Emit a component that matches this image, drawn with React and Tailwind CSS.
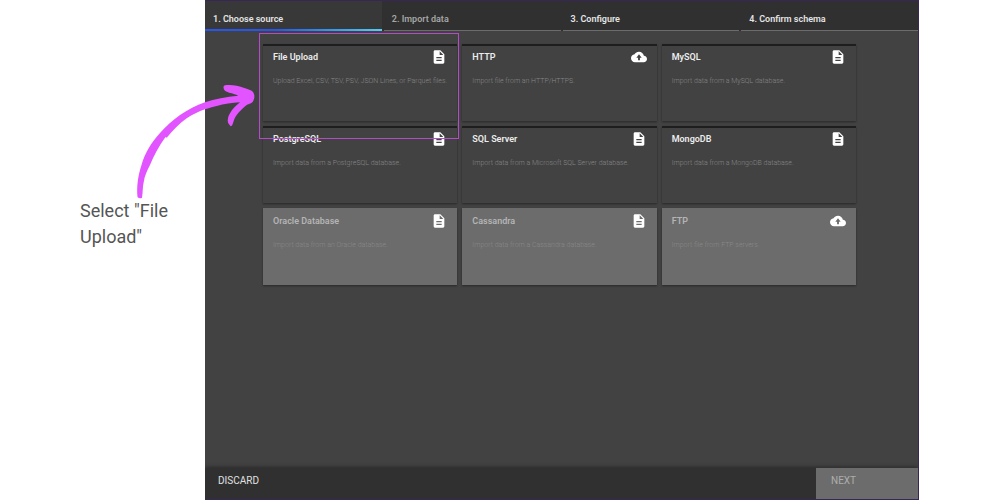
import React from 'react';
import { MdDescription } from 'react-icons/md';
import clsx from 'clsx';

const steps = [
  { label: '1. Choose source', state: 'active' },
  { label: '2. Import data', state: 'muted' },
  { label: '3. Configure', state: 'idle' },
  { label: '4. Confirm schema', state: 'idle' },
];

const sources = [
  { title: 'File Upload', text: 'Upload Excel, CSV, TSV, PSV, JSON Lines, or Parquet files.', highlight: true },
  { title: 'HTTP', text: 'Import file from an HTTP/HTTPS.', cloud: true },
  { title: 'MySQL', text: 'Import data from a MySQL database.' },
  { title: 'PostgreSQL', text: 'Import data from a PostgreSQL database.' },
  { title: 'SQL Server', text: 'Import data from a Microsoft SQL Server database.' },
  { title: 'MongoDB', text: 'Import data from a MongoDB database.' },
  { title: 'Oracle Database', text: 'Import data from an Oracle database.', disabled: true },
  { title: 'Cassandra', text: 'Import data from a Cassandra database.', disabled: true },
  { title: 'FTP', text: 'Import file from FTP servers.', cloud: true, disabled: true },
];

const CloudIcon = () => (
  <svg viewBox="0 0 24 24" className="size-4" fill="currentColor">
    <path d="M19.35 10.04C18.67 6.59 15.64 4 12 4 9.11 4 6.6 5.64 5.35 8.04 2.34 8.36 0 10.91 0 14c0 3.31 2.69 6 6 6h13c2.76 0 5-2.24 5-5 0-2.64-2.05-4.78-4.65-4.96zM13.4 13v4h-2.8v-4H8l4-5 4 5h-2.6z" />
  </svg>
);

const SourceCard = ({ source }) => (
  <div className="relative">
    <button
      type="button"
      disabled={source.disabled}
      className={clsx(
        'flex h-[77px] w-full flex-col border-t-2 px-[10px] pt-[3px] text-left shadow-[0_1px_2px_rgba(0,0,0,0.4)]',
        source.disabled ? 'border-[#6c6c6c] bg-[#6c6c6c]' : 'border-[#1e1e1e] bg-[#424242]'
      )}
    >
      <span className="flex h-4 w-full items-center justify-between">
        <span className={clsx('text-[9px] leading-3 font-semibold', source.disabled ? 'text-[#b4b4b4]' : 'text-[#ececec]')}>
          {source.title}
        </span>
        <span className="text-white">
          {source.cloud ? <CloudIcon /> : <MdDescription className="size-4" />}
        </span>
      </span>
      <span className={clsx('mt-[10px] text-[7px] leading-3 font-light whitespace-nowrap', source.disabled ? 'text-[#888888]' : 'text-[#868686]')}>
        {source.text}
      </span>
    </button>
    {source.highlight && (
      <div className="pointer-events-none absolute -top-[11px] -right-0.5 -bottom-[18px] -left-1 z-10 border border-[#b44bc8]" />
    )}
  </div>
);

// hand drawn arrow from the note to the first card
const Arrow = () => (
  <svg viewBox="0 0 122 120" className="absolute top-[82px] left-[134px] z-20 h-[120px] w-[122px]" fill="#e254ff">
    <path d="M3.500 115C2.500 104 4 94 7.500 83C11 71 17 61 26 51C32 44 39 38 46 33C54 28 62 23 71 20.300C81 17 92 15 104.300 13.700C99 11 94 11 91 8.700C89 6.500 89 3.500 91 3.200C95 2.600 99 3 102.700 3.700C108 5 113 6.800 117.700 8.700Q119.500 9.500 120.300 13Q120.800 17 119.300 18.700C118 21.500 115 21.500 112.700 23C109 26 105.500 29 102.700 33C100 36.500 99.500 40 98.300 43Q97 45 96 43.500Q93.500 41 93.700 38.700C94 35.500 94.500 33.500 96 31.300C98.500 26.500 102 23.500 106 20.300C98 20.500 90 22 82.700 24C78.500 25 75 26 71 27.300C64.500 29.500 58.500 32.500 52.700 36.300C45 42 39 48 32.700 55.700L31.500 55C25 64 20 73 16 83C13 89 10.500 94 9.800 99.700C8.500 104 9 110 8 115.700Q5.500 117 3.500 115Z" />
  </svg>
);

export default function App() {
  return (
    <div className="relative flex min-h-screen bg-white pr-[81px] font-[Roboto,sans-serif]">
      <aside className="w-[205px] shrink-0 pt-[198px] pl-20">
        <p className="w-24 text-lg leading-[26px] text-[#555555]">Select "File Upload"</p>
      </aside>
      <Arrow />

      <div className="flex flex-1 flex-col overflow-hidden border-t border-r border-b border-[#382659] bg-[#424242]">
        <nav className="grid grid-cols-4 gap-0.5 bg-[#303030]">
          {steps.map((step) => (
            <button
              key={step.label}
              type="button"
              className={clsx(
                'flex h-[30px] flex-col justify-between text-left',
                step.state === 'active' ? 'bg-[#383838]' : 'bg-[#303030]'
              )}
            >
              <span className={clsx('px-2 pt-3 text-[9px] leading-3 font-semibold', step.state === 'muted' ? 'text-[#a5a5a5]' : 'text-[#e4e4e4]')}>
                {step.label}
              </span>
              <span
                className={clsx(
                  'w-full',
                  step.state === 'active' ? 'h-0.5 bg-linear-to-r from-[#2856e8] from-40% to-[#55cdf5]' : 'h-px bg-[#6c6c6c]'
                )}
              />
            </button>
          ))}
        </nav>

        <main className="flex-1 pt-[13px] pr-[62px] pl-[58px]">
          <div className="grid grid-cols-3 gap-[5px]">
            {sources.map((source) => (
              <SourceCard key={source.title} source={source} />
            ))}
          </div>
        </main>

        <footer className="flex h-[31px] justify-between bg-[#303030] shadow-[0_-1px_4px_rgba(0,0,0,0.4)]">
          <button type="button" className="px-[13px] pb-1.5 text-[10px] text-[#e0e0e0]">DISCARD</button>
          <button type="button" disabled className="w-[102px] bg-[#6c6c6c] px-[15px] pb-1.5 text-left text-[10px] text-[#adadad]">
            NEXT
          </button>
        </footer>
      </div>
    </div>
  );
}
